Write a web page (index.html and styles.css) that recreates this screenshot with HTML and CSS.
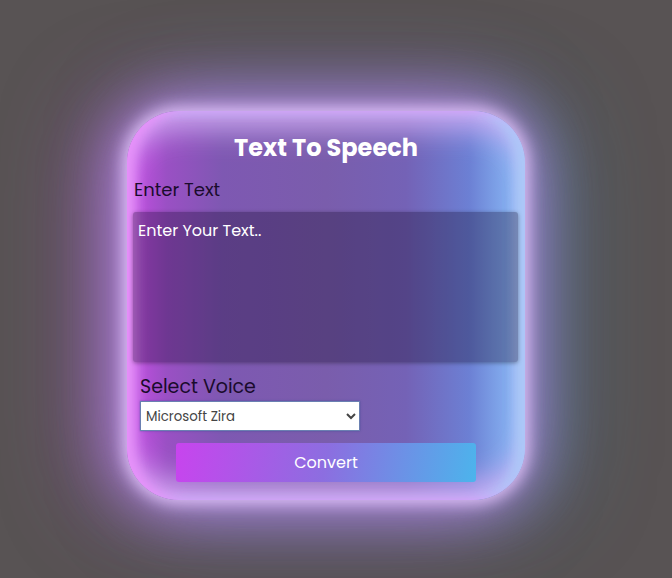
FILE: index.html
```html
<!DOCTYPE html>
<html>
<head>
<meta charset="utf-8">
<link rel="stylesheet" href="styles.css">
</head>
<body>
<div class="card">
  <h1 class="title">Text To Speech</h1>
  <label class="label" for="txt">Enter Text</label>
  <textarea id="txt" class="area" placeholder="Enter Your Text.."></textarea>
  <div class="voice">
    <label class="label label-lg" for="sel">Select Voice</label>
    <select id="sel" class="select">
      <option>Microsoft Zira</option>
    </select>
  </div>
  <button class="btn">Convert</button>
</div>
</body>
</html>
```
FILE: styles.css
```css
* { box-sizing: border-box; }
html, body { margin: 0; }
body {
  background: #585354;
  min-height: 100vh;
  padding: 111px 0 0 127px;
  font-family: "Poppins", "Inter", "Noto Sans", sans-serif;
}
.card {
  width: 398px;
  height: 389px;
  border-radius: 52px;
  background: linear-gradient(90deg, #c04ee0 2%, #9a50c4 10%, #7e58b2 24%, #7a5dac 50%, #7462b6 70%, #6c80d4 86%, #84b0f0 96%, #a0c4f6 100%);
  padding: 20px 7px 0 6px;
  display: flex;
  flex-direction: column;
  box-shadow:
    0 0 16px 4px rgba(228,200,252,0.9),
    0 0 55px 12px rgba(185,145,235,0.7),
    -24px 0 90px 8px rgba(200,90,230,0.55),
    24px 0 90px 8px rgba(60,160,200,0.5),
    inset 8px 0 12px #e890fa,
    inset -8px 0 12px #a8ccf8,
    inset 0 26px 30px -8px rgba(212,176,246,0.9),
    inset 0 -26px 30px -8px rgba(215,176,246,0.9);
}
.title {
  margin: 0;
  text-align: center;
  color: #fff;
  font-size: 24px;
  font-weight: 700;
  line-height: 34px;
  padding-left: 1px;
}
.label {
  display: block;
  color: #1a0b2c;
  font-size: 18px;
  line-height: 22px;
  margin: 14px 0 0 1px;
}
.area {
  display: block;
  width: 385px;
  height: 150px;
  margin-top: 11px;
  resize: none;
  border: none;
  outline: none;
  border-radius: 3px;
  background: rgba(10,0,30,0.3);
  box-shadow: 0 1px 4px rgba(0,0,0,0.35);
  color: #fff;
  font-family: inherit;
  font-size: 16px;
  padding: 6px 5px;
}
.area::placeholder { color: #fff; opacity: 1; }
.voice {
  padding-left: 7px;
  margin-top: 13px;
}
.label-lg {
  font-size: 19px;
  line-height: 24px;
  margin: 0;
}
.select {
  display: block;
  width: 220px;
  height: 30px;
  margin-top: 2px;
  background: #fff;
  border: 1px solid #6a80b2;
  box-shadow: 0 0 2px rgba(50,70,140,0.6);
  border-radius: 0;
  color: #444;
  font-family: inherit;
  font-size: 13.333px;
  padding: 0 1px;
}
.btn {
  align-self: center;
  margin-top: 12px;
  width: 300px;
  height: 39px;
  border: none;
  border-radius: 3px;
  background: linear-gradient(100deg, #c844ee 0%, #8c6ee0 50%, #4cb4ec 100%);
  color: #fff;
  font-family: inherit;
  font-size: 16px;
  margin-left: 1px;
}
```
